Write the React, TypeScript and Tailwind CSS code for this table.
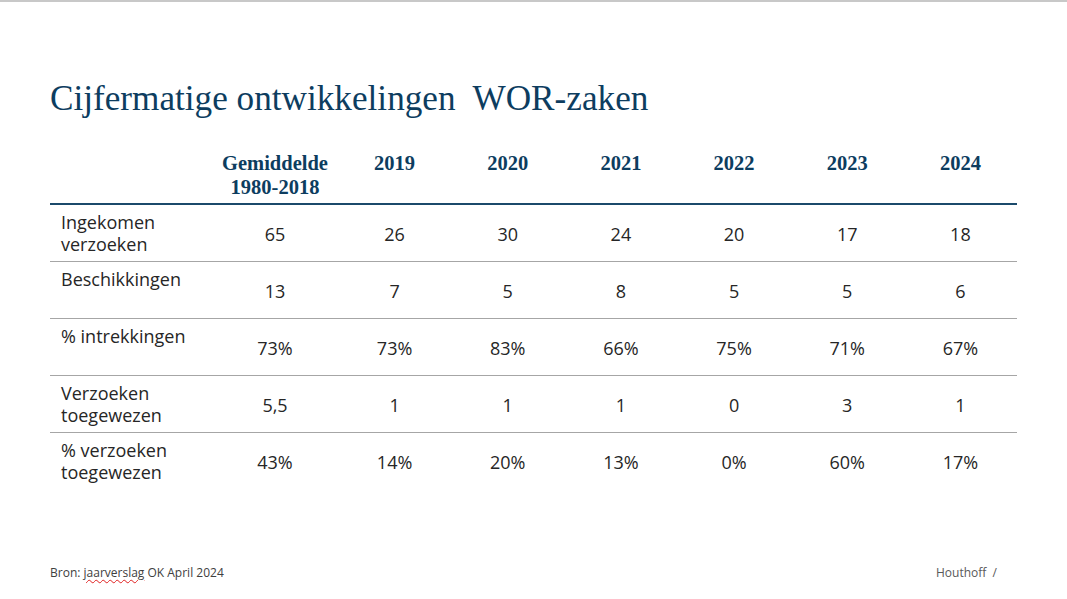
import React from "react";

const serif = "font-['Georgia','Liberation_Serif',serif]";
const sans = "font-['Open_Sans','Noto_Sans',sans-serif]";

const years = ["2019", "2020", "2021", "2022", "2023", "2024"];

const rows: { label: string[]; values: string[] }[] = [
    { label: ["Ingekomen", "verzoeken"], values: ["65", "26", "30", "24", "20", "17", "18"] },
    { label: ["Beschikkingen"], values: ["13", "7", "5", "8", "5", "5", "6"] },
    { label: ["% intrekkingen"], values: ["73%", "73%", "83%", "66%", "75%", "71%", "67%"] },
    { label: ["Verzoeken", "toegewezen"], values: ["5,5", "1", "1", "1", "0", "3", "1"] },
    { label: ["% verzoeken", "toegewezen"], values: ["43%", "14%", "20%", "13%", "0%", "60%", "17%"] },
];

export default function App() {
    return (
        <div className="w-[1067px] h-[599px] bg-white border-t-2 border-[#c8c8c8] flex flex-col overflow-hidden">
            <div className="px-[50px] flex-1 flex flex-col">
                <h1 className={`${serif} text-[#0d3d5f] text-[35.2px] leading-[40px] mt-[77px] whitespace-pre`}>
                    Cijfermatige ontwikkelingen  WOR-zaken
                </h1>

                <div className="mt-[29px] w-[967px]">
                    <div className={`grid grid-cols-[162px_126px_repeat(6,1fr)] h-[57px] border-b-2 border-[#1b4a6b] ${serif} text-[#0d3d5f] font-bold text-[20.5px] leading-[24px]`}>
                        <div />
                        <div className="text-center pt-[3px]">
                            Gemiddelde
                            <br />
                            1980-2018
                        </div>
                        {years.map((y) => (
                            <div key={y} className="text-center pt-[3px]">
                                {y}
                            </div>
                        ))}
                    </div>

                    {rows.map((row, i) => (
                        <div
                            key={i}
                            className={`grid grid-cols-[162px_126px_repeat(6,1fr)] h-[57px] ${i < rows.length - 1 ? "border-b border-[#a6a6a6]" : ""} ${sans} text-[#262626] text-[18px] leading-[22px]`}
                        >
                            <div className="pl-[11px] pt-[6px]">
                                {row.label.map((l) => (
                                    <div key={l}>{l}</div>
                                ))}
                            </div>
                            {row.values.map((v, j) => (
                                <div key={j} className="flex items-center justify-center pt-[1px]">
                                    {v}
                                </div>
                            ))}
                        </div>
                    ))}
                </div>

                <div className={`mt-auto mb-[18px] flex justify-between ${sans} text-[12px] leading-[16px]`}>
                    <div className="text-[#404040]">
                        Bron:{" "}
                        <span className="underline decoration-wavy decoration-[#e02020] decoration-1 underline-offset-2">
                            jaarverslag
                        </span>{" "}
                        OK April 2024
                    </div>
                    <div className="text-[#595959] mr-[20px]">Houthoff&nbsp; /</div>
                </div>
            </div>
        </div>
    );
}
